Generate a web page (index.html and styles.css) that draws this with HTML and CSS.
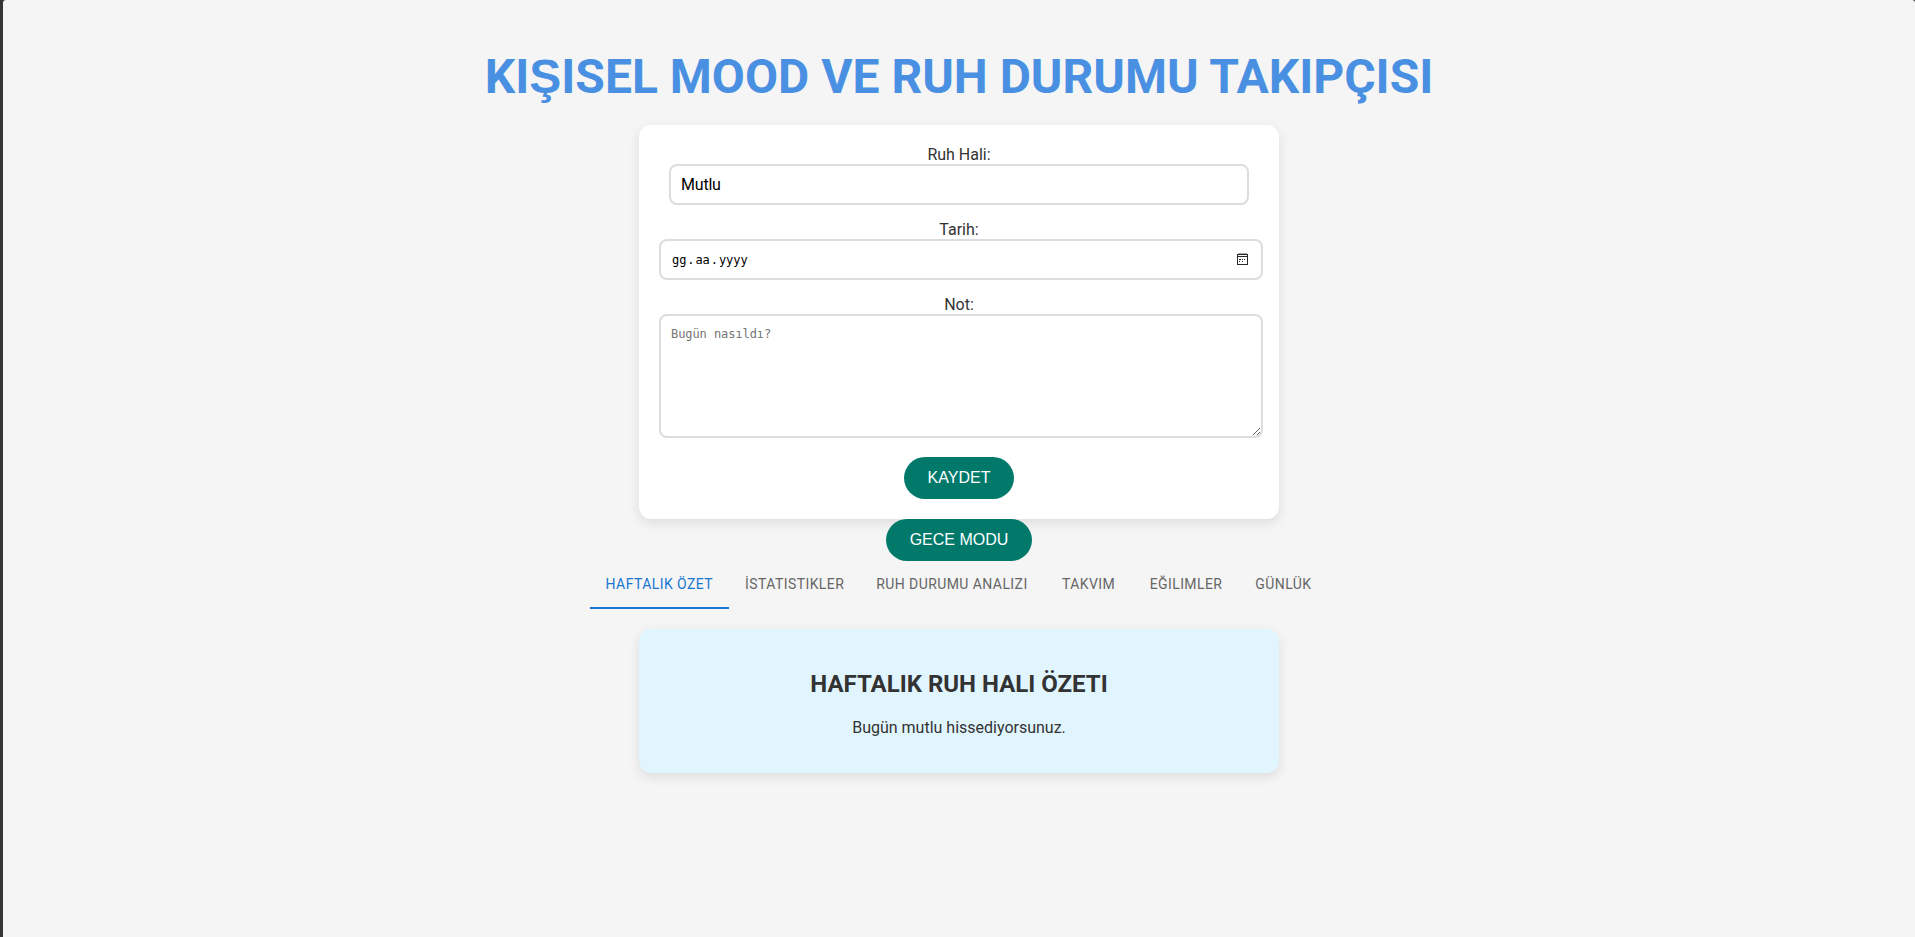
FILE: index.html
```html
<!DOCTYPE html>
<html lang="tr">
<head>
<meta charset="utf-8">
<title>Mood Takip</title>
<link rel="stylesheet" href="styles.css">
</head>
<body>
<main class="app">
  <h1 class="title">KI<span class="alt">Ş</span>ISEL MOOD VE RUH DURUMU TAKIPÇISI</h1>
  <form class="card form">
    <label class="label" for="mood">Ruh Hali:</label>
    <div class="field select" id="mood">Mutlu</div>
    <label class="label">Tarih:</label>
    <div class="field date">
      <span class="date-text"><span>gg</span><span class="dot">.</span><span>aa</span><span class="dot">.</span><span>yyyy</span></span>
      <svg class="calendar" width="11" height="12" viewBox="0 0 11 12" fill="#2a2a2a" shape-rendering="crispEdges">
        <path d="M1 0h9v1h-9z" fill="#aaa"/>
        <path d="M0 1h11v1h-11zM0 3h11v1h-11zM0 11h11v1h-11zM0 2h1v9h-1zM10 2h1v9h-1z"/>
        <path d="M7 6h1v1h-1zM2 6h2v1h-2zM5 6h1v1h-1zM2 8h1v1h-1zM5 8h1v1h-1z"/>
      </svg>
    </div>
    <label class="label" for="note">Not:</label>
    <textarea class="field note" id="note" placeholder="Bugün nasıldı?"></textarea>
    <button class="button save" type="button">KAYDET</button>
  </form>
  <button class="button night" type="button">GECE MODU</button>
  <nav class="tabs">
    <a class="tab active">HAFTALIK ÖZET</a>
    <a class="tab">İSTATISTIKLER</a>
    <a class="tab">RUH DURUMU ANALIZI</a>
    <a class="tab">TAKVIM</a>
    <a class="tab">EĞILIMLER</a>
    <a class="tab">GÜNLÜK</a>
  </nav>
  <section class="card summary">
    <h2 class="heading">HAFTALIK RUH HALI ÖZETI</h2>
    <p class="text">Bugün mutlu hissediyorsunuz.</p>
  </section>
</main>
</body>
</html>
```

FILE: styles.css
```css
* { box-sizing: border-box; }
body {
  margin: 0;
  background: #353535;
  font-family: Roboto, sans-serif;
  font-size: 16px;
  line-height: 19px;
  color: #333;
}
.app {
  margin-left: 3px;
  height: 937px;
  padding-top: 49px;
  background: #f5f5f5;
  border-radius: 3px 3px 0 0;
  display: flex;
  flex-direction: column;
  align-items: center;
  overflow: hidden;
}
.title {
  height: 56px;
  margin: 0 0 20px;
  font-size: 48px;
  line-height: 56px;
  font-weight: 700;
  color: #4a90e2;
  white-space: nowrap;
}
.alt { font-family: "Liberation Sans", Arial, sans-serif; line-height: 1; }
.card {
  width: 640px;
  padding: 20px;
  border-radius: 12px;
  box-shadow: 0 4px 12px rgba(0, 0, 0, .1);
  flex: none;
}
.form {
  height: 394px;
  background: #fff;
  display: flex;
  flex-direction: column;
}
.label { text-align: center; height: 19px; }
.field {
  border: 2px solid #ddd;
  border-radius: 8px;
  background: #fff;
  flex: none;
}
.select {
  width: 580px;
  height: 41px;
  margin: 0 10px 15px;
  padding: 9px 10px;
  color: #000;
  letter-spacing: -.2px;
}
.date {
  width: 604px;
  height: 41px;
  margin-bottom: 15px;
  padding: 0 13px 0 11px;
  display: flex;
  align-items: center;
  justify-content: space-between;
  font: 12px "DejaVu Sans Mono", monospace;
  letter-spacing: -.07px;
  color: #000;
}
.date-text { display: flex; }
.date-text .dot { margin: 0 1px; }
.calendar { margin-bottom: 1px; }
.note {
  display: block;
  width: 604px;
  height: 124px;
  margin: 0 0 19px;
  padding: 11px 10px 10px;
  font: 12px/15px "DejaVu Sans Mono", monospace;
  letter-spacing: -.07px;
  outline: none;
}
.note::placeholder { color: #757575; }
.button {
  height: 42px;
  padding: 0 0 1px;
  border: 0;
  border-radius: 25px;
  background: #00796b;
  color: #fff;
  font: 16px "Liberation Sans", Arial, sans-serif;
  flex: none;
}
.save { width: 110px; align-self: center; }
.night { width: 146px; position: relative; }
.tabs { display: flex; height: 48px; margin-bottom: 20px; flex: none; }
.tab {
  min-width: 90px;
  padding: 0 16px;
  font-size: 14px;
  line-height: 47px;
  letter-spacing: .42px;
  text-align: center;
  white-space: nowrap;
  color: #666;
}
.active { color: #1976d2; border-bottom: 2px solid #1976d2; }
.summary { height: 144px; background: #e1f5fe; text-align: center; }
.heading { margin: 21px 0 19px; font-size: 24px; line-height: 29px; }
.text { margin: 0; }
```
